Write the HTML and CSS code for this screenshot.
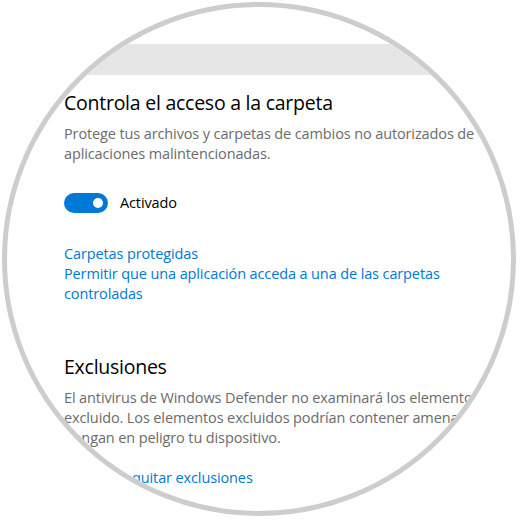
FILE: index.html
```html
<!DOCTYPE html>
<html lang="es">
<head>
<meta charset="utf-8">
<title>Controla el acceso a la carpeta</title>
<link rel="stylesheet" href="styles.css">
</head>
<body>
<div class="lens">
  <div class="content">
    <div class="topbar"></div>
    <div class="panel">
      <h2 class="title">Controla el acceso a la carpeta</h2>
      <p class="desc">Protege tus archivos y carpetas de cambios no autorizados de<br>aplicaciones malintencionadas.</p>
      <div class="toggle-row">
        <span class="toggle"><span class="knob"></span></span>
        <span class="toggle-label">Activado</span>
      </div>
      <div class="links">
        <a class="link" href="#">Carpetas protegidas</a>
        <a class="link" href="#">Permitir que una aplicación acceda a una de las carpetas<br>controladas</a>
      </div>
      <h2 class="title title-2">Exclusiones</h2>
      <p class="desc desc-2">El antivirus de Windows Defender no examinará los elementos que hayas<br>excluido. Los elementos excluidos podrían contener amenazas que<br>pongan en peligro tu dispositivo.</p>
      <a class="link link-last" href="#">Agregar o quitar exclusiones</a>
    </div>
  </div>
</div>
</body>
</html>
```
FILE: styles.css
```css
html, body {
  margin: 0;
  padding: 0;
  background: #ffffff;
}
body {
  width: 520px;
  height: 520px;
  font-family: "Open Sans", "Noto Sans", sans-serif;
}
.lens {
  box-sizing: border-box;
  margin: 2px 0 0 2px;
  width: 514px;
  height: 514px;
  border: 5px solid #cdcdcd;
  border-radius: 50%;
  overflow: hidden;
  background: #ffffff;
}
.content {
  display: flex;
  flex-direction: column;
  padding-top: 37px;
}
.topbar {
  height: 31px;
  background: #e6e6e6;
}
.panel {
  display: flex;
  flex-direction: column;
  align-items: flex-start;
  padding-left: 57px;
  white-space: nowrap;
}
.title {
  margin: 14px 0 0 0;
  font-size: 19.5px;
  letter-spacing: -0.25px;
  line-height: 28px;
  font-weight: 400;
  color: #000000;
}
.title-2 {
  margin-top: 49px;
}
.desc {
  margin: 7px 0 0 0;
  font-size: 14.5px;
  letter-spacing: -0.12px;
  line-height: 20px;
  color: #6b6b6b;
}
.toggle-row {
  display: flex;
  align-items: center;
  gap: 12px;
  margin-top: 29px;
}
.toggle {
  box-sizing: border-box;
  display: flex;
  align-items: center;
  justify-content: flex-end;
  width: 44px;
  height: 20px;
  padding-right: 5px;
  border-radius: 10px;
  background: #0078d7;
}
.knob {
  width: 10px;
  height: 10px;
  border-radius: 50%;
  background: #ffffff;
}
.toggle-label {
  font-size: 14.5px;
  letter-spacing: -0.12px;
  line-height: 20px;
  color: #000000;
}
.links {
  display: flex;
  flex-direction: column;
  margin-top: 31px;
}
.link {
  font-size: 14.5px;
  letter-spacing: -0.12px;
  line-height: 20px;
  color: #0078d7;
  text-decoration: none;
}
.link-last {
  margin-top: 20px;
}
```
